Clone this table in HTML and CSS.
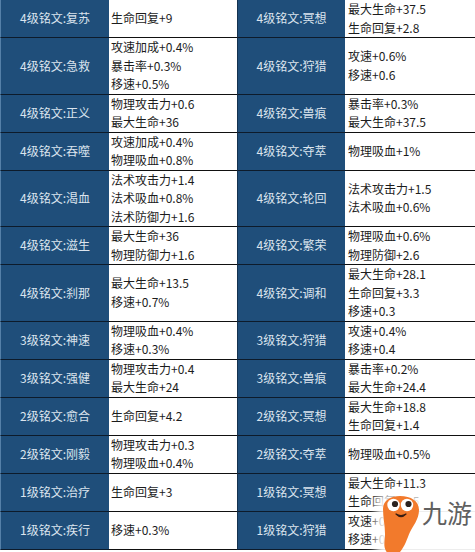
FILE: index.html
```html
<!DOCTYPE html>
<html lang="zh">
<head>
<meta charset="utf-8">
<link rel="stylesheet" href="styles.css">
</head>
<body>
<div class="page">
  <div class="table">
    <div class="lab">4级铭文:复苏</div><div class="val">生命回复+9</div>
    <div class="lab lab-r">4级铭文:冥想</div><div class="val val-r">最大生命+37.5<br>生命回复+2.8</div>

    <div class="lab">4级铭文:急救</div><div class="val">攻速加成+0.4%<br>暴击率+0.3%<br>移速+0.5%</div>
    <div class="lab lab-r">4级铭文:狩猎</div><div class="val val-r">攻速+0.6%<br>移速+0.6</div>

    <div class="lab">4级铭文:正义</div><div class="val">物理攻击力+0.6<br>最大生命+36</div>
    <div class="lab lab-r">4级铭文:兽痕</div><div class="val val-r">暴击率+0.3%<br>最大生命+37.5</div>

    <div class="lab">4级铭文:吞噬</div><div class="val">攻速加成+0.4%<br>物理吸血+0.8%</div>
    <div class="lab lab-r">4级铭文:夺萃</div><div class="val val-r">物理吸血+1%</div>

    <div class="lab">4级铭文:渴血</div><div class="val">法术攻击力+1.4<br>法术吸血+0.8%<br>法术防御力+1.6</div>
    <div class="lab lab-r">4级铭文:轮回</div><div class="val val-r">法术攻击力+1.5<br>法术吸血+0.6%</div>

    <div class="lab">4级铭文:滋生</div><div class="val">最大生命+36<br>物理防御力+1.6</div>
    <div class="lab lab-r">4级铭文:繁荣</div><div class="val val-r">物理吸血+0.6%<br>物理防御+2.6</div>

    <div class="lab">4级铭文:刹那</div><div class="val">最大生命+13.5<br>移速+0.7%</div>
    <div class="lab lab-r">4级铭文:调和</div><div class="val val-r">最大生命+28.1<br>生命回复+3.3<br>移速+0.3</div>

    <div class="lab">3级铭文:神速</div><div class="val">物理吸血+0.4%<br>移速+0.3%</div>
    <div class="lab lab-r">3级铭文:狩猎</div><div class="val val-r">攻速+0.4%<br>移速+0.4</div>

    <div class="lab">3级铭文:强健</div><div class="val">物理攻击力+0.4<br>最大生命+24</div>
    <div class="lab lab-r">3级铭文:兽痕</div><div class="val val-r">暴击率+0.2%<br>最大生命+24.4</div>

    <div class="lab">2级铭文:愈合</div><div class="val">生命回复+4.2</div>
    <div class="lab lab-r">2级铭文:冥想</div><div class="val val-r">最大生命+18.8<br>生命回复+1.4</div>

    <div class="lab">2级铭文:刚毅</div><div class="val">物理攻击力+0.3<br>物理吸血+0.4%</div>
    <div class="lab lab-r">2级铭文:夺萃</div><div class="val val-r">物理吸血+0.5%</div>

    <div class="lab">1级铭文:治疗</div><div class="val">生命回复+3</div>
    <div class="lab lab-r">1级铭文:冥想</div><div class="val val-r">最大生命+11.3<br>生命回复+0.5</div>

    <div class="lab">1级铭文:疾行</div><div class="val">移速+0.3%</div>
    <div class="lab lab-r">1级铭文:狩猎</div><div class="val val-r">攻速+0.2%<br>移速+0.2</div>
  </div>

  <div class="mark">
    <div class="glow"></div>
    <svg class="blob" width="46" height="60" viewBox="0 0 46 60">
      <path d="M5 13 C5 4 13 0 22 0 C33 0 41 5 41 14 C41 23 35 30 32 36 C29 43 27 50 22 56 C18 60 11 60 8 55 C5 50 7 44 7 38 C7 30 5 21 5 13 Z" fill="#f27a2c"/>
      <circle cx="15.5" cy="9" r="6.2" fill="#fff"/>
      <circle cx="29" cy="9" r="6.2" fill="#fff"/>
      <circle cx="17" cy="8" r="3.1" fill="#2b2320"/>
      <circle cx="30.5" cy="8" r="3.1" fill="#2b2320"/>
      <path d="M18 18 Q23 23 28 18 Q23 21 18 18 Z" fill="#3a1e12" stroke="#3a1e12" stroke-width="1.2" stroke-linejoin="round"/>
    </svg>
    <div class="brand">九游</div>
  </div>
</div>
</body>
</html>
```

FILE: styles.css
```css
html, body {
  margin: 0;
  padding: 0;
  background: #ffffff;
}

.page {
  position: relative;
  width: 475px;
  height: 552px;
  overflow: hidden;
}

.table {
  display: grid;
  grid-template-columns: 109px 128px 108px 130px;
  font-family: "Noto Sans CJK SC", "Noto Sans", sans-serif;
  font-size: 12px;
  line-height: 18.5px;
}

.lab {
  background: #1f4e7a;
  color: #dbe4ee;
  display: flex;
  align-items: center;
  justify-content: center;
  border-bottom: 1px solid #0d1b2b;
  border-left: 1px solid #5580a8;
  box-sizing: border-box;
}

.lab-r {
  border-left: 1px solid #14324f;
}

.val {
  background: #ffffff;
  color: #1c1c1c;
  display: flex;
  align-items: center;
  padding-left: 2px;
  border-bottom: 1px solid #111111;
  box-sizing: border-box;
}

.val-r {
  padding-left: 3px;
}

.mark {
  position: absolute;
  left: 372px;
  top: 486px;
  width: 103px;
  height: 66px;
}

.glow {
  position: absolute;
  left: 4px;
  top: 8px;
  width: 110px;
  height: 66px;
  background: rgba(255, 255, 255, 0.93);
  filter: blur(5px);
}

.blob {
  position: absolute;
  left: 6px;
  top: 10px;
}

.brand {
  position: absolute;
  left: 50px;
  top: 11px;
  font-family: "Noto Sans CJK SC", sans-serif;
  font-size: 25px;
  line-height: 30px;
  color: #606060;
}
```
